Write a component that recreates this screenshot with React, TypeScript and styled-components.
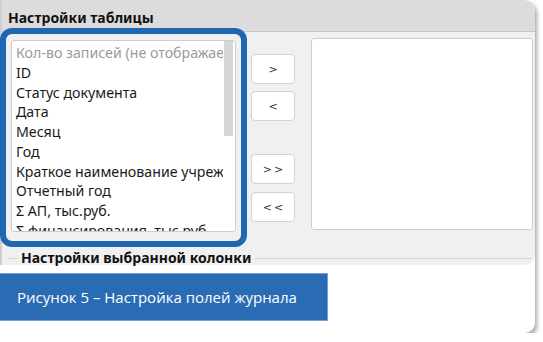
import styled, { createGlobalStyle } from 'styled-components';

const GlobalStyle = createGlobalStyle`
  html, body {
    margin: 0;
    padding: 0;
    background: #ffffff;
  }
  body {
    font-family: 'Noto Sans', 'Open Sans', sans-serif;
  }
`;

const Card = styled.div`
  width: 535px;
  height: 333px;
  background: #ffffff;
  border-radius: 0 10px 10px 0;
  box-shadow: 2px 3px 4px rgba(0, 0, 0, 0.35);
  overflow: hidden;
  display: flex;
  flex-direction: column;
`;

const Window = styled.div`
  height: 265px;
  background: #f0f0f0;
  border-left: 2px solid #cfcfcf;
  border-radius: 0 10px 10px 0;
  display: flex;
  flex-direction: column;
  box-sizing: border-box;
`;

const TitleBar = styled.div`
  height: 32px;
  flex-shrink: 0;
  box-sizing: border-box;
  background: #dcdcdc;
  border-bottom: 1px solid #c6c6c6;
  border-top-right-radius: 10px;
  padding: 8px 0 0 6px;
  font-size: 14px;
  font-weight: 700;
  color: #111;
`;

const Body = styled.div`
  display: flex;
  align-items: flex-start;
`;

const Highlight = styled.div`
  margin: -4px 0 0 -2px;
  width: 247px;
  height: 219px;
  box-sizing: border-box;
  border: 6px solid #1f66b3;
  border-radius: 12px;
  padding: 6px 5px 9px 5px;
  position: relative;
  z-index: 1;
`;

const ListBox = styled.div<{ $width?: number }>`
  height: 192px;
  width: ${(p) => (p.$width ? `${p.$width}px` : '100%')};
  box-sizing: border-box;
  background: #ffffff;
  border: 1px solid #cdcdcd;
  border-radius: 3px;
  position: relative;
  overflow: hidden;
`;

const Items = styled.div`
  padding: 2px 0 0 4px;
  width: 207px;
  overflow: hidden;
`;

const Item = styled.div<{ $muted?: boolean }>`
  height: 19.75px;
  line-height: 19.75px;
  font-size: 14.2px;
  white-space: nowrap;
  color: ${(p) => (p.$muted ? '#9a9a9a' : '#1a1a1a')};
`;

const ScrollThumb = styled.div`
  position: absolute;
  top: 0;
  right: 2px;
  width: 9px;
  height: 95px;
  background: #d6d6d6;
`;

const ButtonColumn = styled.div`
  margin: 22px 16px 0 4px;
  display: flex;
  flex-direction: column;
`;

const MoveButton = styled.button<{ $gap: number }>`
  width: 44px;
  height: 30px;
  margin-top: ${(p) => p.$gap}px;
  background: #ffffff;
  border: 1px solid #d2d2d2;
  border-radius: 4px;
  font-family: 'DejaVu Sans', sans-serif;
  font-size: 11px;
  letter-spacing: 2px;
  color: #333;
  padding: 0 0 0 2px;
`;

const RightColumn = styled.div`
  margin-top: 6px;
`;

const GroupRow = styled.div`
  display: flex;
  align-items: center;
  margin-top: 2px;
  padding: 0 4px 0 6px;
  gap: 4px;
`;

const GroupLine = styled.div<{ $grow?: boolean }>`
  height: 1px;
  background: #d4d4d4;
  width: 9px;
  ${(p) => (p.$grow ? 'flex: 1;' : '')}
`;

const GroupTitle = styled.div`
  font-size: 14px;
  font-weight: 700;
  color: #111;
  line-height: 18px;
`;

const Caption = styled.div`
  margin-top: 8px;
  width: 328px;
  height: 48px;
  box-sizing: border-box;
  background: #2a6cb4;
  border: 1px solid #6f9fd6;
  border-left: none;
  color: #ffffff;
  font-family: 'Open Sans', sans-serif;
  font-size: 15px;
  padding-left: 17px;
  display: flex;
  align-items: center;
`;

const items = [
  'ID',
  'Статус документа',
  'Дата',
  'Месяц',
  'Год',
  'Краткое наименование учреждения',
  'Отчетный год',
  'Σ АП, тыс.руб.',
  'Σ финансирования, тыс.руб.',
];

const buttons = [
  { label: '>', gap: 0 },
  { label: '<', gap: 7 },
  { label: '>>', gap: 33 },
  { label: '<<', gap: 8 },
];

export default function App() {
  return (
    <>
      <GlobalStyle />
      <Card>
        <Window>
          <TitleBar>Настройки таблицы</TitleBar>
          <Body>
            <Highlight>
              <ListBox>
                <Items>
                  <Item $muted>Кол-во записей (не отображается)</Item>
                  {items.map((it) => (
                    <Item key={it}>{it}</Item>
                  ))}
                </Items>
                <ScrollThumb />
              </ListBox>
            </Highlight>
            <ButtonColumn>
              {buttons.map((b) => (
                <MoveButton key={b.label} $gap={b.gap}>
                  {b.label}
                </MoveButton>
              ))}
            </ButtonColumn>
            <RightColumn>
              <ListBox $width={222} />
            </RightColumn>
          </Body>
          <GroupRow>
            <GroupLine />
            <GroupTitle>Настройки выбранной колонки</GroupTitle>
            <GroupLine $grow />
          </GroupRow>
        </Window>
        <Caption>Рисунок 5 – Настройка полей журнала</Caption>
      </Card>
    </>
  );
}
